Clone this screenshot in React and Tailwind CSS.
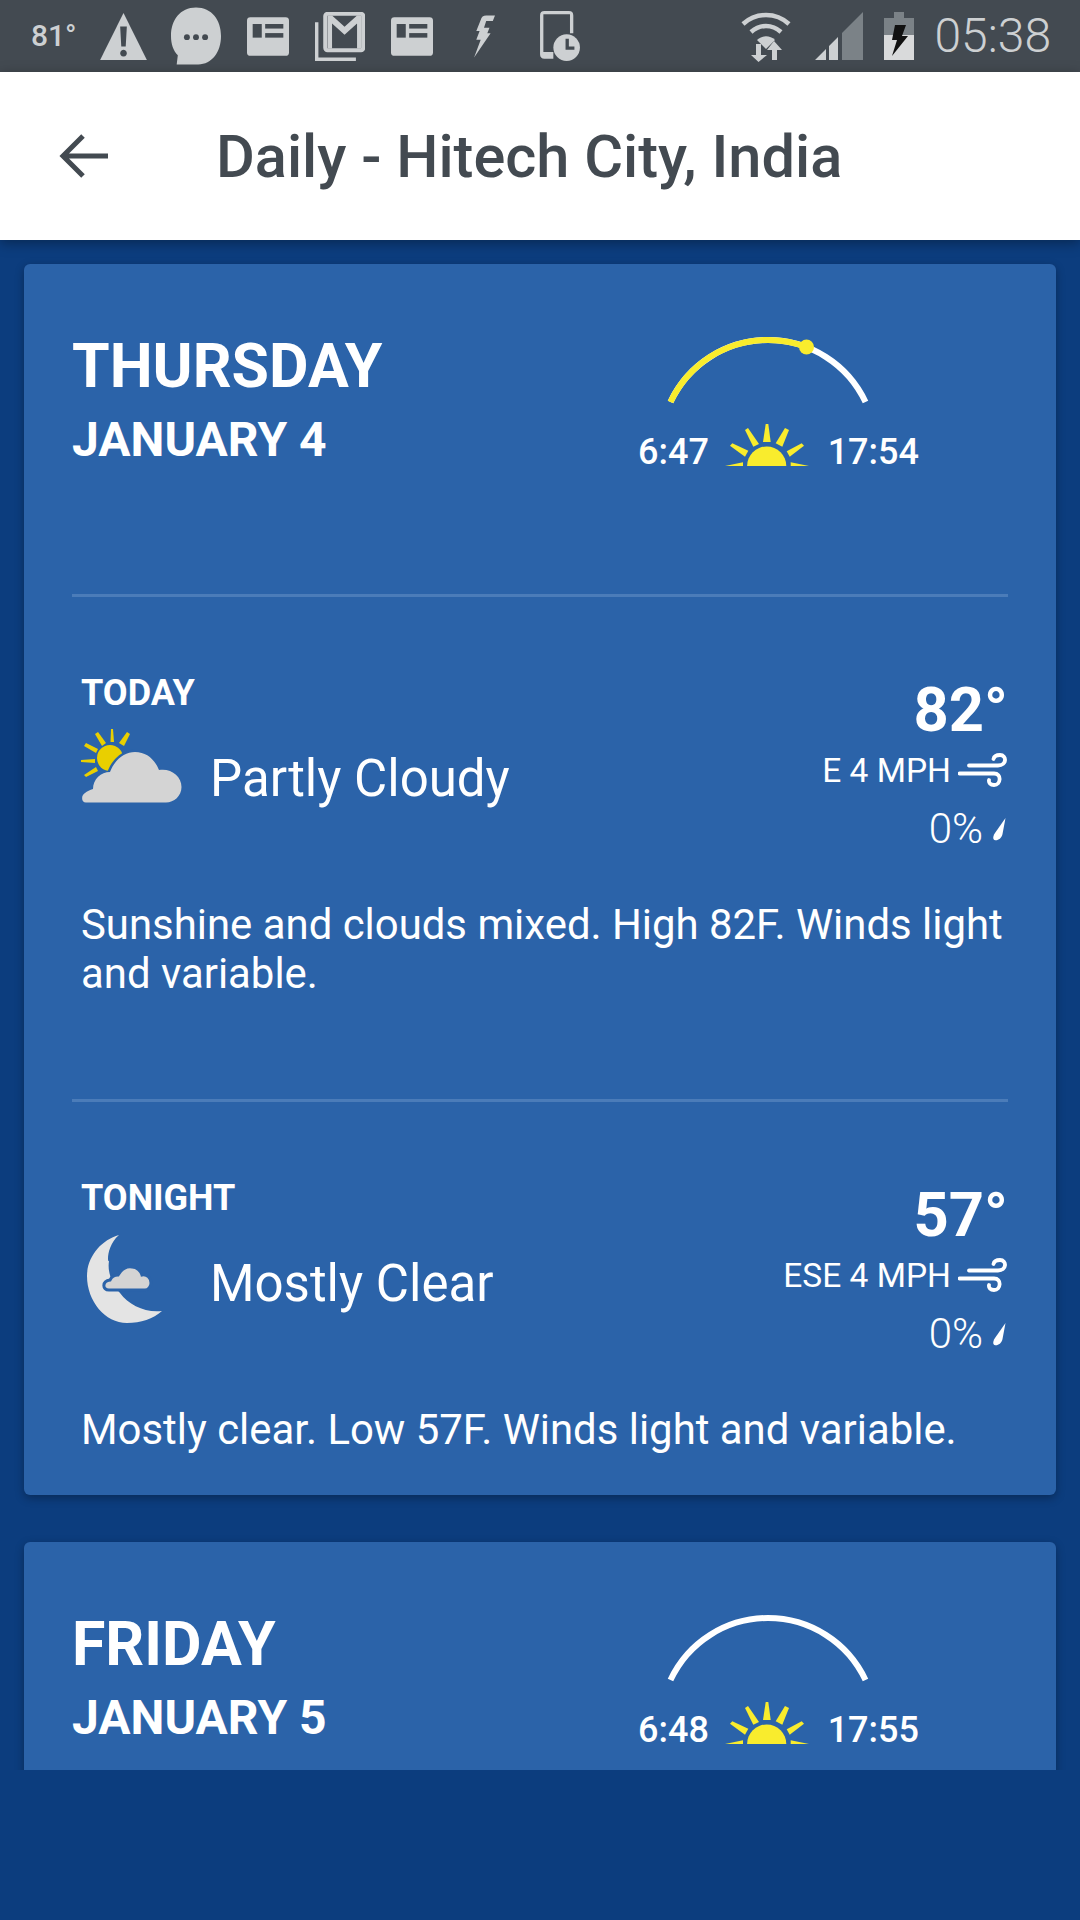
const Roboto = 'font-[Roboto,sans-serif]';

function AlertIcon() {
  return (
    <svg width="47" height="49" viewBox="0 0 42 44" className="ml-[25px]">
      <path d="M21 1 L42 43 H0 Z" fill="#cdd0d2" />
      <path d="M18 13 H24 L23 31 H19 Z M21 34 a3 3 0 1 0 0.01 0 Z" fill="#434a51" />
    </svg>
  );
}

function BubbleIcon() {
  return (
    <svg width="50" height="58" viewBox="0 0 44 50" className="ml-[24px]">
      <path d="M22 0 C36 0 44 11 44 25 C44 39 36 50 24 50 H5 L6 42 C2 38 0 32 0 25 C0 11 8 0 22 0 Z" fill="#cdd0d2" />
      <circle cx="14" cy="26" r="2.6" fill="#434a51" />
      <circle cx="22" cy="26" r="2.6" fill="#434a51" />
      <circle cx="30" cy="26" r="2.6" fill="#434a51" />
    </svg>
  );
}

function NewsIcon() {
  return (
    <svg width="42" height="39" viewBox="0 0 37 34" className="ml-[26px]">
      <rect width="37" height="34" rx="3" fill="#cdd0d2" />
      <rect x="5" y="6" width="8" height="12" fill="#434a51" />
      <rect x="16" y="6" width="16" height="4" fill="#434a51" />
      <rect x="16" y="14" width="16" height="4" fill="#434a51" />
    </svg>
  );
}

function GmailIcon() {
  return (
    <svg width="50" height="49" viewBox="0 0 44 43" className="ml-[26px]">
      <path d="M1.5 9 V41.5 H36" fill="none" stroke="#cdd0d2" strokeWidth="3" />
      <rect x="9" y="1.5" width="33.5" height="32" rx="2" fill="none" stroke="#cdd0d2" strokeWidth="3.5" />
      <path d="M11 3 H15 L26 13 L37 3 H41 V32 H37 V10 L26 20 L15 10 V32 H11 Z" fill="#cdd0d2" />
    </svg>
  );
}

function FlashIcon() {
  return (
    <svg width="22" height="43" viewBox="0 0 20 38" className="ml-[40px]">
      <path d="M12 0 H20 L18 5 H12 L10 11 H15 L13 16 H16 L1 38 L7 22 H3 L6 14 H3 L7 4 Q8 0 12 0 Z" fill="#cdd0d2" />
    </svg>
  );
}

function TabletClockIcon() {
  return (
    <svg width="40" height="51" viewBox="0 0 36 46" className="ml-[45px]">
      <path d="M4 0 H26 Q30 0 30 4 V20 H27 V3 H3 V37 H12 V43 H4 Q0 43 0 39 V4 Q0 0 4 0 Z" fill="#cdd0d2" />
      <circle cx="24" cy="33" r="12" fill="#cdd0d2" />
      <path d="M23 25 H26 V32 H31 V35 H23 Z" fill="#434a51" />
    </svg>
  );
}

function WifiIcon() {
  return (
    <svg width="50" height="52" viewBox="0 0 50 52">
      <path d="M2 14 C15 2 35 2 48 14" fill="none" stroke="#cdd0d2" strokeWidth="4.5" />
      <path d="M10 22 C19 14 31 14 40 22" fill="none" stroke="#cdd0d2" strokeWidth="4.5" />
      <path d="M16 30 C21 25 29 25 34 30 L25 39 Z" fill="#cdd0d2" />
      <path d="M15 34 H20 V45 H26 L17.5 52 L10 45 H15 Z" fill="#cdd0d2" />
      <path d="M33 31 L41 40 H36 V50 H31 V40 H26 Z" fill="#cdd0d2" />
    </svg>
  );
}

function SignalIcon() {
  return (
    <svg width="48" height="48" viewBox="0 0 48 48" className="ml-[24px]">
      <path d="M0 48 L11 37 V48 Z M14 34 L23 25 V48 H14 Z" fill="#cdd0d2" />
      <path d="M27 21 L48 0 V48 H27 Z" fill="#7b8287" />
    </svg>
  );
}

function BatteryIcon() {
  return (
    <svg width="30" height="48" viewBox="0 0 30 48" className="ml-[21px]">
      <rect x="10" y="0" width="10" height="6" fill="#7b8287" />
      <rect x="0" y="6" width="30" height="17" fill="#7b8287" />
      <rect x="0" y="23" width="30" height="25" fill="#d9dadb" />
      <path d="M11 13 H22 L18 24 H24 L8 44 L13 28 H8 Z" fill="#111" />
    </svg>
  );
}

function StatusBar() {
  return (
    <div className={`flex h-[72px] shrink-0 items-center bg-[#434a51] pl-[31px] ${Roboto}`}>
      <span className="w-[44px] text-[30px] font-medium leading-none text-[#cdd0d2]">81°</span>
      <AlertIcon />
      <BubbleIcon />
      <NewsIcon />
      <GmailIcon />
      <NewsIcon />
      <FlashIcon />
      <TabletClockIcon />
      <div className="ml-auto flex items-center pr-[29px]">
        <WifiIcon />
        <SignalIcon />
        <BatteryIcon />
        <span className="ml-[20px] text-[48px] font-light leading-none text-[#cdd0d2]">05:38</span>
      </div>
    </div>
  );
}

function Header() {
  return (
    <div className="relative z-10 flex h-[168px] shrink-0 items-center bg-white shadow-[0_3px_12px_rgba(0,0,0,0.35)]">
      <svg width="50" height="46" viewBox="0 0 50 46" className="ml-[59px]">
        <path d="M49 23 H4 M24 3 L4 23 L24 43" fill="none" stroke="#434a51" strokeWidth="5" />
      </svg>
      <h1 className="ml-[107px] pt-[4px] text-[59.5px] font-medium leading-none text-[#434a51]">Daily - Hitech City, India</h1>
    </div>
  );
}

function SunArc({ progress }) {
  return (
    <svg width="210" height="76" viewBox="0 0 210 76" className="block">
      <path d="M7.5 68 A107.7 107.7 0 0 1 202.5 68" fill="none" stroke="#fff" strokeWidth="6" />
      {progress && (
        <>
          <path d="M7.5 68 A107.7 107.7 0 0 1 143.5 13" fill="none" stroke="#f9ec2d" strokeWidth="6" />
          <circle cx="143.5" cy="13" r="7.5" fill="#f9ec2d" />
        </>
      )}
    </svg>
  );
}

function SunriseIcon() {
  return (
    <svg width="84" height="42" viewBox="0 0 84 42" className="block">
      <g fill="#f9ec2d">
        <path d="M22.1 42 A19.6 19.6 0 0 1 61.3 42 Z" />
        <path d="M38 18 L40.7 0 H43.3 L45.7 18 Z" />
        <path d="M20 6 L23 4 L34 20 L28.3 22.7 Z" />
        <path d="M64 6 L60 4 L50.7 19.3 L57.3 22.7 Z" />
        <path d="M5 21.7 L7.3 19.3 L23.3 26.7 L20 32.7 Z" />
        <path d="M79 21.7 L76.7 19.3 L61.7 27.3 L64.7 32.7 Z" />
        <path d="M0 42 L18 38.3 V42 Z" />
        <path d="M84 42 L65.7 38.3 V42 Z" />
      </g>
    </svg>
  );
}

function SunWidget({ sunrise, sunset, progress }) {
  return (
    <div className="flex w-[281px] flex-col items-center">
      <div className="pr-[22px]">
        <SunArc progress={progress} />
      </div>
      <div className="mt-[14px] flex w-full items-end text-[36px] font-medium leading-none text-white">
        <span className="-mb-1 w-[87px]">{sunrise}</span>
        <SunriseIcon />
        <span className="-mb-1 ml-auto">{sunset}</span>
      </div>
    </div>
  );
}

function DayHeader({ day, date, sunrise, sunset, progress }) {
  return (
    <div className="flex justify-between pr-[137px] pl-12 pt-[62px]">
      <div className="pt-[7px] text-white">
        <div className="text-[60.8px] font-bold leading-[68px]">{day}</div>
        <div className="mt-[13px] text-[48px] font-bold leading-[52px]">{date}</div>
      </div>
      <div className="pt-[8px]">
        <SunWidget sunrise={sunrise} sunset={sunset} progress={progress} />
      </div>
    </div>
  );
}

function PartlyCloudyIcon() {
  return (
    <svg width="102" height="74" viewBox="0 0 102 74" className="mb-[26px] block">
      <g fill="#e9cf00">
        <path d="M29.5 13 L30 0 H32 L33 13 Z" />
        <path d="M21 17 L14 5 L17 3 L25 14 Z" />
        <path d="M38 14 L46 3 L49 5 L43 17 Z" />
        <path d="M15 24 L3 17 L5 14 L17 20 Z" />
        <path d="M14 30 L0 31 V33 L14 34 Z" />
        <path d="M15 38 L3 46 L5 48 L17 42 Z" />
        <circle cx="29" cy="29" r="13" />
      </g>
      <path d="M29 43 C34 30 44 23 54 23" fill="none" stroke="#2b63a9" strokeWidth="5" />
      <path d="M5 73.5 C0 73.5 0 66 4 64 C6 62 9 61 12 60 C12 50 20 43 29 43 C34 30 44 23 54 23 C66 23 74 31 78 41 C90 39 100.5 47 100.5 58 C100.5 67 93 73.5 85 73.5 Z" fill="#d4d4d4" />
    </svg>
  );
}

function MoonCloudIcon() {
  return (
    <svg width="76" height="90" viewBox="0 0 76 90" className="mb-[8px] ml-[6px] block">
      <path d="M32 0 C20 10 20 28 22 26 C20 38 26 50 33 58 C42 70 58 78 75 76 C66 84 54 88 40 88 C18 88 0 66 0 41 C0 22 14 5 32 0 Z" fill="#e4e4e4" />
      <path d="M22 55 C15 55 15 46 23 45 C25 41 28 40 31 40 C34 34 40 31 45 32 C50 32 54 36 55 40 C60 39 64 43 64 48 C64 52 61 55 58 55 Z" fill="#d4d4d4" stroke="#2b63a9" strokeWidth="3" />
    </svg>
  );
}

function WindIcon() {
  return (
    <svg width="50" height="36" viewBox="0 0 50 36" className="block">
      <g fill="none" stroke="#fff" strokeWidth="3.8" strokeLinecap="round">
        <path d="M11 12.5 H40 C49 12.5 49 2 42 2 C38 2 36 3.5 35.5 6" />
        <path d="M1.5 20.5 H36 C44 20.5 43 32 36 32 C32.5 32 30.5 30 31 27" />
      </g>
    </svg>
  );
}

function DropIcon() {
  return (
    <svg width="13" height="23" viewBox="0 0 13 23" className="block">
      <path d="M12.5 0 L9.5 16 C8.5 21 4 23 1.5 22 C-0.5 21 0 18 2 15 Z" fill="#fff" />
    </svg>
  );
}

function Forecast({ label, icon, condition, temp, wind, precip, description }) {
  return (
    <div className="pr-[48px] pl-[57px]">
      <div className="flex justify-between">
        <div>
          <div className="pt-[1px] text-[36px] font-bold leading-[40px] text-white">{label}</div>
          <div className="mt-[31px] flex items-center">
            <div className="flex h-[70px] w-[129px] items-center">{icon}</div>
            <span className="text-[51px] leading-[70px] text-white">{condition}</span>
          </div>
        </div>
        <div className="flex flex-col items-end pt-[5px] text-white">
          <div className="text-[61.5px] font-bold leading-[66px]">{temp}</div>
          <div className="mt-[4px] flex items-center gap-[7px] text-[33.5px] leading-[48px]">
            <span>{wind}</span>
            <WindIcon />
          </div>
          <div className="mt-[6px] flex items-center gap-[10px] pr-[2px] text-[42px] font-light leading-[56px]">
            <span>{precip}</span>
            <DropIcon />
          </div>
        </div>
      </div>
      <p className="mt-[43px] text-[41.9px] leading-[49px] text-white">{description}</p>
    </div>
  );
}

function Divider() {
  return <div className="mx-12 h-[3px] bg-[#4b7cb9]" />;
}

export default function App() {
  return (
    <div className={`flex h-[1920px] w-[1080px] flex-col bg-[#0c3d7e] ${Roboto}`}>
      <StatusBar />
      <Header />
      <div className="h-[1530px] shrink-0 overflow-hidden px-6 pt-6">
        <div className="h-[1231px] rounded-md bg-[#2b63a9] shadow-[0_3px_10px_rgba(0,0,0,0.3)]">
          <DayHeader day="THURSDAY" date="JANUARY 4" sunrise="6:47" sunset="17:54" progress />
          <div className="mt-[128px]"><Divider /></div>
          <div className="pt-[75px]">
            <Forecast
              label="TODAY"
              icon={<PartlyCloudyIcon />}
              condition="Partly Cloudy"
              temp="82°"
              wind="E 4 MPH"
              precip="0%"
              description="Sunshine and clouds mixed. High 82F. Winds light and variable."
            />
          </div>
          <div className="mt-[101px]"><Divider /></div>
          <div className="pt-[75px]">
            <Forecast
              label="TONIGHT"
              icon={<MoonCloudIcon />}
              condition="Mostly Clear"
              temp="57°"
              wind="ESE 4 MPH"
              precip="0%"
              description="Mostly clear. Low 57F. Winds light and variable."
            />
          </div>
        </div>
        <div className="mt-[47px] h-[400px] rounded-md bg-[#2b63a9] shadow-[0_3px_10px_rgba(0,0,0,0.3)]">
          <DayHeader day="FRIDAY" date="JANUARY 5" sunrise="6:48" sunset="17:55" />
        </div>
      </div>
    </div>
  );
}
